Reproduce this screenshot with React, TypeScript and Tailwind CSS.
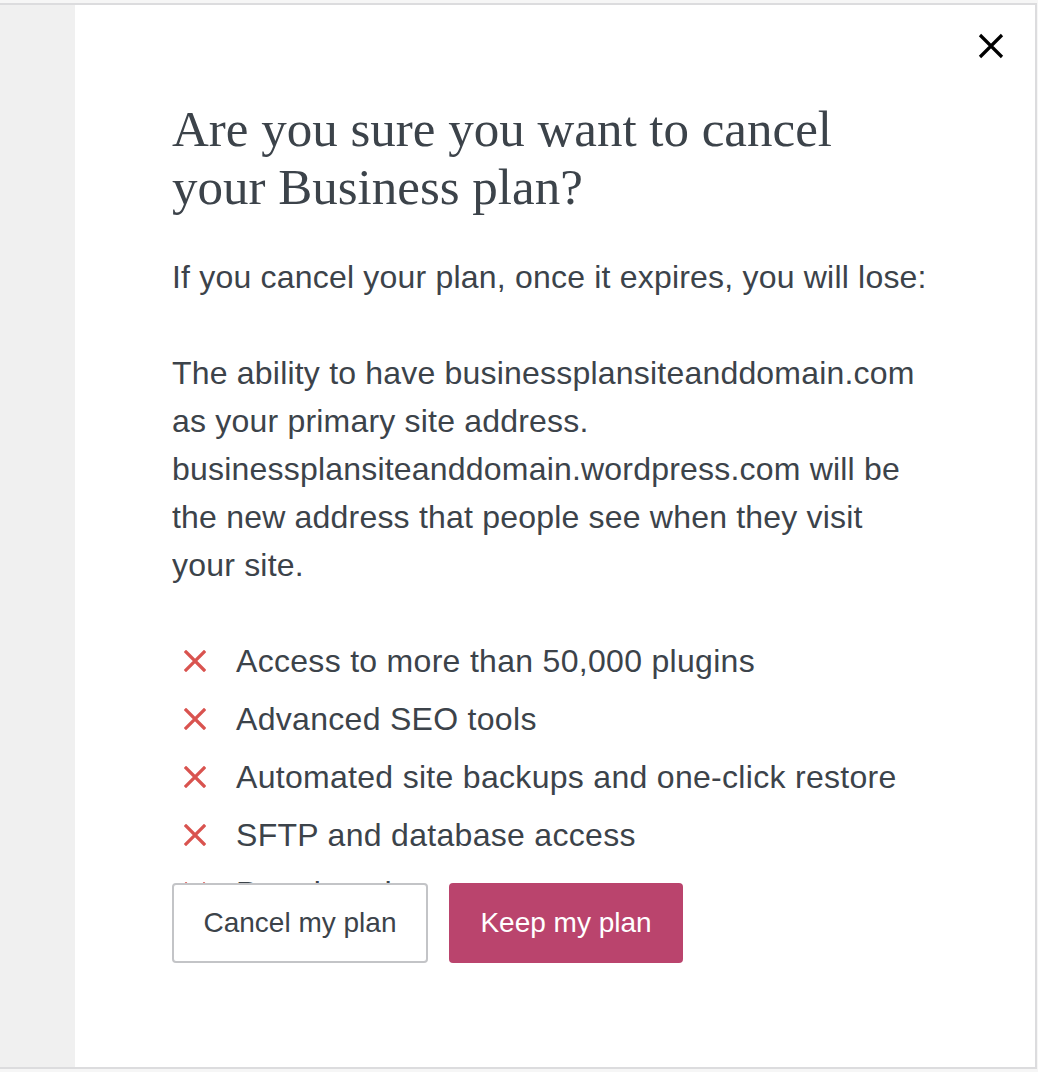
import React from "react";

const features = [
  "Access to more than 50,000 plugins",
  "Advanced SEO tools",
  "Automated site backups and one-click restore",
  "SFTP and database access",
  "Premium themes",
];

function CrossIcon() {
  return (
    <svg width="22" height="22" viewBox="0 0 22 22" className="shrink-0">
      <path d="M2 2 L20 20 M20 2 L2 20" stroke="#d9534f" strokeWidth="3.2" strokeLinecap="square" fill="none" />
    </svg>
  );
}

export default function App() {
  return (
    <div className="h-[1072px] w-[1038px] bg-[#f6f6f6] pt-[3px] font-['Liberation_Sans',Arial,sans-serif]">
      <div className="flex h-[1066px] w-[1037px] border-y-2 border-r-2 border-[#dcdcde]">
        <div className="w-[75px] shrink-0 bg-[#f0f0f0]" />
        <div className="relative flex-1 bg-white pl-[97px] pt-[95px]">
          <button className="absolute right-[28px] top-[25px] p-0" aria-label="Close">
            <svg width="32" height="32" viewBox="0 0 32 32">
              <path d="M5 5 L27 27 M27 5 L5 27" stroke="#000" strokeWidth="3.2" fill="none" />
            </svg>
          </button>

          <div className="h-[783px] overflow-hidden pr-[40px] text-[#3c434a]">
            <h1 className="whitespace-nowrap font-['Liberation_Serif',Georgia,serif] text-[51px] font-normal leading-[58px] text-[#3c434a]">
              Are you sure you want to cancel
              <br />
              your Business plan?
            </h1>
            <p className="mt-[37px] whitespace-nowrap text-[32px] leading-[48px] tracking-[0.2px]">
              If you cancel your plan, once it expires, you will lose:
            </p>
            <p className="mt-[48px] whitespace-nowrap text-[32px] leading-[48px] tracking-[0.2px]">
              The ability to have businessplansiteanddomain.com
              <br />
              as your primary site address.
              <br />
              businessplansiteanddomain.wordpress.com will be
              <br />
              the new address that people see when they visit
              <br />
              your site.
            </p>
            <ul className="mt-[43px]">
              {features.map((f) => (
                <li key={f} className="flex items-center gap-[30px] pl-[12px] text-[32px] leading-[58px] tracking-[0.3px]">
                  <CrossIcon />
                  <span className="whitespace-nowrap">{f}</span>
                </li>
              ))}
            </ul>
          </div>

          <div className="flex gap-[21px]">
            <button className="h-[80px] w-[256px] rounded-[4px] border-2 border-[#c3c4c7] bg-white text-[28px] text-[#3c434a]">
              Cancel my plan
            </button>
            <button className="h-[80px] w-[234px] rounded-[4px] bg-[#ba446d] text-[28px] text-white">
              Keep my plan
            </button>
          </div>
        </div>
      </div>
    </div>
  );
}
